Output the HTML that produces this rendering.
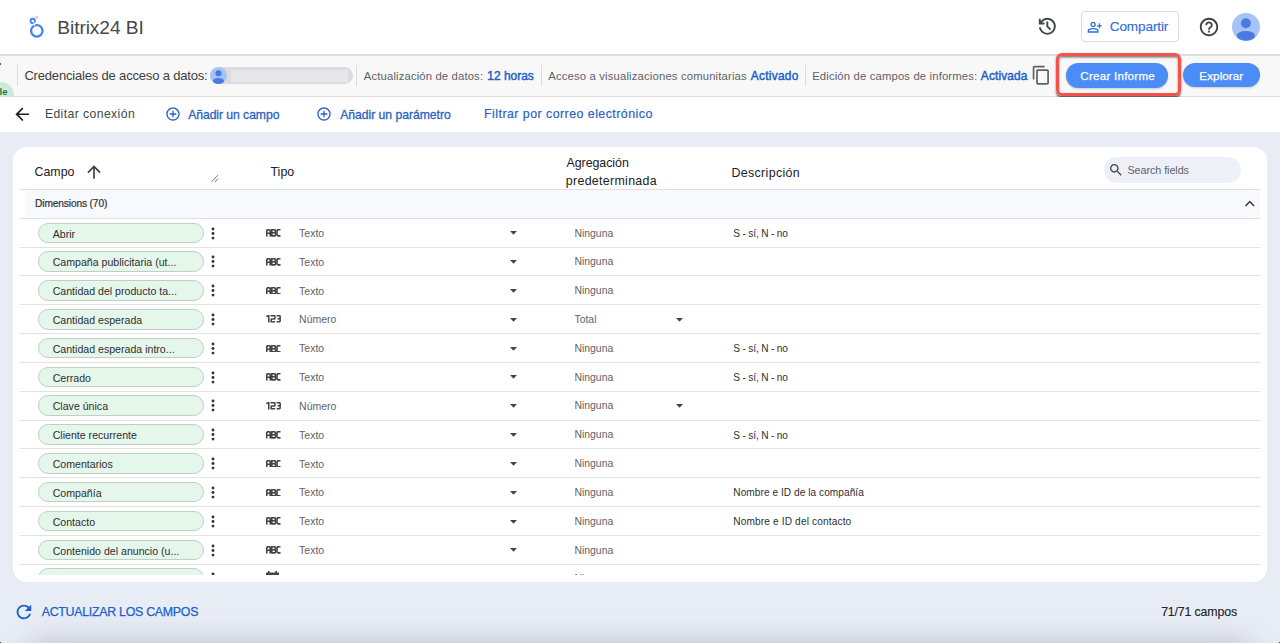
<!DOCTYPE html>
<html><head><meta charset="utf-8"><title>Bitrix24 BI</title><style>
*{margin:0;padding:0}
html,body{width:1280px;height:643px;overflow:hidden;background:#e8ecf5;font-family:'Liberation Sans',sans-serif}
.tx,.rt{position:absolute;line-height:1;white-space:nowrap;font-family:'Liberation Sans',sans-serif}
svg{overflow:visible}
</style></head><body>
<div style="position:absolute;left:0.00px;top:0.00px;width:1280.00px;height:54.00px;background:#fff;"></div>
<div style="position:absolute;left:0.00px;top:54.00px;width:1280.00px;height:2.00px;background:#dcdde1;"></div>
<svg style="position:absolute;left:26.00px;top:13.00px;width:22.00px;height:28.00px;" viewBox="26 13 22 28"><circle cx="36.8" cy="30.8" r="5.75" fill="none" stroke="#4285f4" stroke-width="2.3"/><circle cx="32.7" cy="20.9" r="2.15" fill="none" stroke="#4285f4" stroke-width="1.85"/><circle cx="36.5" cy="17.3" r="1.15" fill="none" stroke="#8ab4f8" stroke-width="0.8"/><path d="M33.9 22.0L34.6 26.0" stroke="#fff" stroke-width="1.1"/></svg>
<svg style="position:absolute;left:1036.40px;top:15.10px;width:22.60px;height:22.60px;" viewBox="0 -960 960 960"><path d="M480-120q-138 0-240.5-91.5T122-440h82q14 104 92.5 172T480-200q117 0 198.5-81.5T760-480q0-117-81.5-198.5T480-760q-69 0-129 32t-101 88h110v80H120v-240h80v94q51-64 124.5-99T480-840q75 0 140.5 28.5t114 77q48.5 48.5 77 114T840-480q0 75-28.5 140.5t-77 114q-48.5 48.5-114 77T480-120Zm112-192L440-464v-216h80v184l128 128-56 56Z" fill="#444746"/></svg>
<div style="position:absolute;left:1081.00px;top:11.30px;width:97.50px;height:30.40px;box-sizing:border-box;border:1px solid #dadce0;border-radius:4px;background:#fff;"></div>
<svg style="position:absolute;left:1086.60px;top:18.50px;width:16.40px;height:16.40px;" viewBox="0 -960 960 960"><path d="M360-480q-66 0-113-47t-47-113q0-66 47-113t113-47q66 0 113 47t47 113q0 66-47 113t-113 47ZM40-160v-112q0-34 17.5-62.5T104-378q62-31 126-46.5T360-440q66 0 130 15.5T616-378q29 15 46.5 43.5T680-272v112H40Zm80-80h480v-32q0-11-5.5-20T580-306q-54-27-109-40.5T360-360q-56 0-111 13.5T140-306q-9 5-14.5 14t-5.5 20v32Zm240-320q33 0 56.5-23.5T440-640q0-33-23.5-56.5T360-720q-33 0-56.5 23.5T280-640q0 33 23.5 56.5T360-560Z" fill="#2f6fdc"/></svg>
<svg style="position:absolute;left:1096.00px;top:21.50px;width:7.00px;height:7.00px;" viewBox="1096 21.5 7 7"><path d="M1099.4 22.8V27.7M1096.95 25.25H1101.85" stroke="#2f6fdc" stroke-width="1.25"/></svg>
<svg style="position:absolute;left:1197.50px;top:15.50px;width:22.00px;height:22.00px;" viewBox="0 0 24 24"><path d="M11 18h2v-2h-2v2zm1-16C6.48 2 2 6.48 2 12s4.48 10 10 10 10-4.48 10-10S17.52 2 12 2zm0 18c-4.41 0-8-3.59-8-8s3.59-8 8-8 8 3.59 8 8-3.59 8-8 8zm0-14c-2.21 0-4 1.790-4 4h2c0-1.1.9-2 2-2s2 .9 2 2c0 2-3 1.75-3 5h2c0-2.25 3-2.5 3-5 0-2.21-1.79-4-4-4z" fill="#3c4043"/></svg>
<svg style="position:absolute;left:1232.00px;top:12.80px;width:28.00px;height:28.00px;" viewBox="0 0 28 28"><circle cx="14" cy="14" r="14" fill="#a6c3f8"/><circle cx="13.9" cy="10.3" r="5.0" fill="#4a7be2"/><ellipse cx="13.9" cy="22.8" rx="9.1" ry="4.9" fill="#4a7be2"/></svg>
<div style="position:absolute;left:0.00px;top:56.00px;width:1280.00px;height:40.00px;background:#f8f8f8;"></div>
<div style="position:absolute;left:0.00px;top:95.70px;width:1280.00px;height:1.20px;background:#dedede;"></div>
<div style="position:absolute;left:0.00px;top:63.00px;width:1.30px;height:1.50px;background:#555;"></div>
<div style="position:absolute;left:-14.00px;top:82.00px;width:27.70px;height:26.00px;background:#cfead7;border-radius:13px;"></div>
<div style="position:absolute;left:-0.5px;top:86.5px;font:bold 9.5px 'Liberation Sans',sans-serif;color:#1e7e3e;line-height:1">le</div>
<div style="position:absolute;left:17.20px;top:65.00px;width:1.00px;height:20.50px;background:#dcdcdc;"></div>
<div style="position:absolute;left:356.30px;top:65.00px;width:1.00px;height:20.50px;background:#dcdcdc;"></div>
<div style="position:absolute;left:541.20px;top:65.00px;width:1.00px;height:20.50px;background:#dcdcdc;"></div>
<div style="position:absolute;left:805.20px;top:65.00px;width:1.00px;height:20.50px;background:#dcdcdc;"></div>
<div style="position:absolute;left:210.10px;top:66.80px;width:142.60px;height:17.20px;background:#dcdcdf;border-radius:8.6px;"></div>
<div style="position:absolute;left:230.50px;top:69.80px;width:117.00px;height:12.20px;background:#e6e7eb;filter:blur(0.6px);"></div>
<svg style="position:absolute;left:210.10px;top:66.80px;width:17.10px;height:17.10px;" viewBox="0 0 28 28"><circle cx="14" cy="14" r="14" fill="#a6c3f8"/><circle cx="13.9" cy="10.3" r="5.0" fill="#4a7be2"/><ellipse cx="13.9" cy="22.8" rx="9.1" ry="4.9" fill="#4a7be2"/></svg>
<svg style="position:absolute;left:1031.30px;top:65.10px;width:20.50px;height:20.50px;" viewBox="0 0 24 24"><path d="M16 1H4c-1.1 0-2 .9-2 2v14h2V3h12V1zm3 4H8c-1.1 0-2 .9-2 2v14c0 1.1.9 2 2 2h11c1.1 0 2-.9 2-2V7c0-1.1-.9-2-2-2zm0 16H8V7h11v14z" fill="#616161"/></svg>
<div style="position:absolute;left:1055.70px;top:53.30px;width:125.00px;height:42.40px;box-sizing:border-box;border:3px solid #f4524a;border-radius:6px;box-shadow:0 1.5px 2px rgba(0,0,0,.6), inset 0 1.5px 2px rgba(0,0,0,.5);"></div>
<div style="position:absolute;left:1066.00px;top:63.00px;width:102.40px;height:24.50px;background:#4b8cf6;border-radius:12.25px;box-shadow:0 1px 2px rgba(0,0,0,.18);"></div>
<div style="position:absolute;left:1183.30px;top:63.20px;width:76.50px;height:24.20px;background:#4b8cf6;border-radius:12.1px;box-shadow:0 1px 2px rgba(0,0,0,.18);"></div>
<div style="position:absolute;left:0.00px;top:96.90px;width:1280.00px;height:35.10px;background:#fff;"></div>
<svg style="position:absolute;left:11.70px;top:104.00px;width:20.50px;height:20.50px;" viewBox="0 0 24 24"><path d="M20 11H7.83l5.59-5.59L12 4l-8 8 8 8 1.41-1.41L7.83 13H20v-2z" fill="#202124"/></svg>
<svg style="position:absolute;left:164.50px;top:106.20px;width:16.00px;height:16.00px;" viewBox="0 0 24 24"><path d="M13 7h-2v4H7v2h4v4h2v-4h4v-2h-4V7zm-1-5C6.48 2 2 6.48 2 12s4.48 10 10 10 10-4.48 10-10S17.52 2 12 2zm0 18c-4.41 0-8-3.59-8-8s3.59-8 8-8 8 3.59 8 8-3.59 8-8 8z" fill="#2a63c0"/></svg>
<svg style="position:absolute;left:316.10px;top:106.20px;width:16.00px;height:16.00px;" viewBox="0 0 24 24"><path d="M13 7h-2v4H7v2h4v4h2v-4h4v-2h-4V7zm-1-5C6.48 2 2 6.48 2 12s4.48 10 10 10 10-4.48 10-10S17.52 2 12 2zm0 18c-4.41 0-8-3.59-8-8s3.59-8 8-8 8 3.59 8 8-3.59 8-8 8z" fill="#2a63c0"/></svg>
<div style="position:absolute;left:0.00px;top:132.00px;width:1280.00px;height:511.00px;background:#e8ecf5;"></div>
<div style="position:absolute;left:13.00px;top:147.00px;width:1254.30px;height:435.00px;background:#fff;border-radius:14px;"></div>
<svg style="position:absolute;left:84.20px;top:161.90px;width:20.00px;height:20.00px;" viewBox="0 0 24 24"><path d="M4 12l1.41 1.41L11 7.83V20h2V7.83l5.58 5.59L20 12l-8-8-8 8z" fill="#3c4043"/></svg>
<svg style="position:absolute;left:210.00px;top:173.00px;width:10.00px;height:10.00px;" viewBox="210 173 10 10"><path d="M211.7 181.7L217.8 175.2M215 182L218.2 178.6" stroke="#666" stroke-width="0.9"/></svg>
<div style="position:absolute;left:1103.60px;top:157.20px;width:137.00px;height:25.60px;background:#eef0f8;border-radius:12.8px;"></div>
<svg style="position:absolute;left:1108.00px;top:161.70px;width:16.00px;height:16.00px;" viewBox="0 0 24 24"><path d="M15.5 14h-.79l-.28-.27C15.41 12.59 16 11.11 16 9.5 16 5.91 13.09 3 9.5 3S3 5.91 3 9.5 5.91 16 9.5 16c1.61 0 3.090-.59 4.23-1.57l.27.28v.79l5 4.99L20.49 19l-4.99-5zm-6 0C7.01 14 5 11.99 5 9.5S7.01 5 9.5 5 14 7.01 14 9.5 11.99 14 9.5 14z" fill="#444746"/></svg>
<div style="position:absolute;left:20.00px;top:188.60px;width:1240.00px;height:1.00px;background:#e0e0e0;"></div>
<div style="position:absolute;left:26.00px;top:189.60px;width:1234.00px;height:28.50px;background:#f8f9fd;"></div>
<svg style="position:absolute;left:1239.70px;top:194.10px;width:19.60px;height:19.60px;" viewBox="0 0 24 24"><path d="M12 8l-6 6 1.41 1.41L12 10.83l4.59 4.58L18 14z" fill="#3c4043"/></svg>
<div style="position:absolute;left:20.00px;top:218.00px;width:1240.00px;height:1.00px;background:#e0e0e0;"></div>
<div style="position:absolute;left:13px;top:219px;width:1254px;height:355.7px;overflow:hidden">
<div style="position:absolute;left:24.50px;top:3.50px;width:166.10px;height:20.60px;box-sizing:border-box;background:#e5f6eb;border:1px solid #c0cec4;border-radius:10.3px;"></div>
<div class="rt" style="left:39.70px;top:9.53px;font-size:10.6px;color:#2e2f31">Abrir</div>
<svg style="position:absolute;left:197.90px;top:7.55px;width:4.00px;height:13.00px;" viewBox="0 0 4 13"><circle cx="2" cy="2.0" r="1.45" fill="#333"/><circle cx="2" cy="6.55" r="1.45" fill="#333"/><circle cx="2" cy="11.1" r="1.45" fill="#333"/></svg>
<svg style="position:absolute;left:252.50px;top:10.25px;width:15.20px;height:7.55px;overflow:hidden;" viewBox="0 0 15.5 7.7"><g fill="none" stroke="#444" stroke-width="1.7"><path d="M0.75 7.7V2.2Q0.75 0.75 2.2 0.75H2.9Q4.35 0.75 4.35 2.2V7.7M0.75 4.3H4.35"/><path d="M5.9 0.75H8.4Q9.6 0.75 9.6 1.95V2.6Q9.6 3.8 8.4 3.8H6M8.4 3.8Q9.8 3.8 9.8 5.0V5.75Q9.8 6.95 8.6 6.95H5.9M5.9 0.03V7.67"/><path d="M14.8 0.75H12.5Q11.2 0.75 11.2 2.05V5.65Q11.2 6.95 12.5 6.95H14.8"/></g></svg>
<div class="rt" style="left:286.10px;top:9.01px;font-size:10.5px;color:#5f6368">Texto</div>
<svg style="position:absolute;left:497.30px;top:12.30px;width:7.00px;height:4.00px;" viewBox="0 0 7 4"><path d="M0 0H7L3.5 3.8Z" fill="#444"/></svg>
<div class="rt" style="left:561.50px;top:9.50px;font-size:10.4px;color:#5f6368">Ninguna</div>
<div class="rt" style="left:720.30px;top:9.95px;font-size:10.1px;color:#2e2f31;letter-spacing:-0.16px">S - sí, N - no</div>
<div style="position:absolute;left:7.00px;top:27.62px;width:1240.00px;height:1.00px;background:#e3e3e3;"></div>
<div style="position:absolute;left:24.50px;top:32.32px;width:166.10px;height:20.60px;box-sizing:border-box;background:#e5f6eb;border:1px solid #c0cec4;border-radius:10.3px;"></div>
<div class="rt" style="left:39.70px;top:38.35px;font-size:10.6px;color:#2e2f31">Campaña publicitaria (ut...</div>
<svg style="position:absolute;left:197.90px;top:36.37px;width:4.00px;height:13.00px;" viewBox="0 0 4 13"><circle cx="2" cy="2.0" r="1.45" fill="#333"/><circle cx="2" cy="6.55" r="1.45" fill="#333"/><circle cx="2" cy="11.1" r="1.45" fill="#333"/></svg>
<svg style="position:absolute;left:252.50px;top:39.07px;width:15.20px;height:7.55px;overflow:hidden;" viewBox="0 0 15.5 7.7"><g fill="none" stroke="#444" stroke-width="1.7"><path d="M0.75 7.7V2.2Q0.75 0.75 2.2 0.75H2.9Q4.35 0.75 4.35 2.2V7.7M0.75 4.3H4.35"/><path d="M5.9 0.75H8.4Q9.6 0.75 9.6 1.95V2.6Q9.6 3.8 8.4 3.8H6M8.4 3.8Q9.8 3.8 9.8 5.0V5.75Q9.8 6.95 8.6 6.95H5.9M5.9 0.03V7.67"/><path d="M14.8 0.75H12.5Q11.2 0.75 11.2 2.05V5.65Q11.2 6.95 12.5 6.95H14.8"/></g></svg>
<div class="rt" style="left:286.10px;top:37.83px;font-size:10.5px;color:#5f6368">Texto</div>
<svg style="position:absolute;left:497.30px;top:41.12px;width:7.00px;height:4.00px;" viewBox="0 0 7 4"><path d="M0 0H7L3.5 3.8Z" fill="#444"/></svg>
<div class="rt" style="left:561.50px;top:38.32px;font-size:10.4px;color:#5f6368">Ninguna</div>
<div style="position:absolute;left:7.00px;top:56.44px;width:1240.00px;height:1.00px;background:#e3e3e3;"></div>
<div style="position:absolute;left:24.50px;top:61.14px;width:166.10px;height:20.60px;box-sizing:border-box;background:#e5f6eb;border:1px solid #c0cec4;border-radius:10.3px;"></div>
<div class="rt" style="left:39.70px;top:67.17px;font-size:10.6px;color:#2e2f31">Cantidad del producto ta...</div>
<svg style="position:absolute;left:197.90px;top:65.19px;width:4.00px;height:13.00px;" viewBox="0 0 4 13"><circle cx="2" cy="2.0" r="1.45" fill="#333"/><circle cx="2" cy="6.55" r="1.45" fill="#333"/><circle cx="2" cy="11.1" r="1.45" fill="#333"/></svg>
<svg style="position:absolute;left:252.50px;top:67.89px;width:15.20px;height:7.55px;overflow:hidden;" viewBox="0 0 15.5 7.7"><g fill="none" stroke="#444" stroke-width="1.7"><path d="M0.75 7.7V2.2Q0.75 0.75 2.2 0.75H2.9Q4.35 0.75 4.35 2.2V7.7M0.75 4.3H4.35"/><path d="M5.9 0.75H8.4Q9.6 0.75 9.6 1.95V2.6Q9.6 3.8 8.4 3.8H6M8.4 3.8Q9.8 3.8 9.8 5.0V5.75Q9.8 6.95 8.6 6.95H5.9M5.9 0.03V7.67"/><path d="M14.8 0.75H12.5Q11.2 0.75 11.2 2.05V5.65Q11.2 6.95 12.5 6.95H14.8"/></g></svg>
<div class="rt" style="left:286.10px;top:66.65px;font-size:10.5px;color:#5f6368">Texto</div>
<svg style="position:absolute;left:497.30px;top:69.94px;width:7.00px;height:4.00px;" viewBox="0 0 7 4"><path d="M0 0H7L3.5 3.8Z" fill="#444"/></svg>
<div class="rt" style="left:561.50px;top:67.14px;font-size:10.4px;color:#5f6368">Ninguna</div>
<div style="position:absolute;left:7.00px;top:85.26px;width:1240.00px;height:1.00px;background:#e3e3e3;"></div>
<div style="position:absolute;left:24.50px;top:89.96px;width:166.10px;height:20.60px;box-sizing:border-box;background:#e5f6eb;border:1px solid #c0cec4;border-radius:10.3px;"></div>
<div class="rt" style="left:39.70px;top:95.99px;font-size:10.6px;color:#2e2f31">Cantidad esperada</div>
<svg style="position:absolute;left:197.90px;top:94.01px;width:4.00px;height:13.00px;" viewBox="0 0 4 13"><circle cx="2" cy="2.0" r="1.45" fill="#333"/><circle cx="2" cy="6.55" r="1.45" fill="#333"/><circle cx="2" cy="11.1" r="1.45" fill="#333"/></svg>
<svg style="position:absolute;left:252.90px;top:96.46px;width:15.50px;height:8.10px;" viewBox="0 0 15.5 8.1"><g fill="none" stroke="#444" stroke-width="1.55"><path d="M0.3 1.7L2.0 0.725H2.75V7.4"/><path d="M4.5 0.725H8.3Q8.95 0.725 8.95 1.4V3.3Q8.95 3.95 8.3 3.95H5.85Q5.2 3.95 5.2 4.6V6.675H9.1"/><path d="M10.6 0.725H13.5Q14.15 0.725 14.15 1.4V6.0Q14.15 6.675 13.5 6.675H10.6M11.6 3.7H14.15"/></g></svg>
<div class="rt" style="left:286.10px;top:95.47px;font-size:10.5px;color:#5f6368">Número</div>
<svg style="position:absolute;left:497.30px;top:98.76px;width:7.00px;height:4.00px;" viewBox="0 0 7 4"><path d="M0 0H7L3.5 3.8Z" fill="#444"/></svg>
<div class="rt" style="left:561.50px;top:95.96px;font-size:10.4px;color:#5f6368">Total</div>
<svg style="position:absolute;left:662.70px;top:98.76px;width:7.00px;height:4.00px;" viewBox="0 0 7 4"><path d="M0 0H7L3.5 3.8Z" fill="#444"/></svg>
<div style="position:absolute;left:7.00px;top:114.08px;width:1240.00px;height:1.00px;background:#e3e3e3;"></div>
<div style="position:absolute;left:24.50px;top:118.78px;width:166.10px;height:20.60px;box-sizing:border-box;background:#e5f6eb;border:1px solid #c0cec4;border-radius:10.3px;"></div>
<div class="rt" style="left:39.70px;top:124.81px;font-size:10.6px;color:#2e2f31">Cantidad esperada intro...</div>
<svg style="position:absolute;left:197.90px;top:122.83px;width:4.00px;height:13.00px;" viewBox="0 0 4 13"><circle cx="2" cy="2.0" r="1.45" fill="#333"/><circle cx="2" cy="6.55" r="1.45" fill="#333"/><circle cx="2" cy="11.1" r="1.45" fill="#333"/></svg>
<svg style="position:absolute;left:252.50px;top:125.53px;width:15.20px;height:7.55px;overflow:hidden;" viewBox="0 0 15.5 7.7"><g fill="none" stroke="#444" stroke-width="1.7"><path d="M0.75 7.7V2.2Q0.75 0.75 2.2 0.75H2.9Q4.35 0.75 4.35 2.2V7.7M0.75 4.3H4.35"/><path d="M5.9 0.75H8.4Q9.6 0.75 9.6 1.95V2.6Q9.6 3.8 8.4 3.8H6M8.4 3.8Q9.8 3.8 9.8 5.0V5.75Q9.8 6.95 8.6 6.95H5.9M5.9 0.03V7.67"/><path d="M14.8 0.75H12.5Q11.2 0.75 11.2 2.05V5.65Q11.2 6.95 12.5 6.95H14.8"/></g></svg>
<div class="rt" style="left:286.10px;top:124.29px;font-size:10.5px;color:#5f6368">Texto</div>
<svg style="position:absolute;left:497.30px;top:127.58px;width:7.00px;height:4.00px;" viewBox="0 0 7 4"><path d="M0 0H7L3.5 3.8Z" fill="#444"/></svg>
<div class="rt" style="left:561.50px;top:124.78px;font-size:10.4px;color:#5f6368">Ninguna</div>
<div class="rt" style="left:720.30px;top:125.23px;font-size:10.1px;color:#2e2f31;letter-spacing:-0.16px">S - sí, N - no</div>
<div style="position:absolute;left:7.00px;top:142.90px;width:1240.00px;height:1.00px;background:#e3e3e3;"></div>
<div style="position:absolute;left:24.50px;top:147.60px;width:166.10px;height:20.60px;box-sizing:border-box;background:#e5f6eb;border:1px solid #c0cec4;border-radius:10.3px;"></div>
<div class="rt" style="left:39.70px;top:153.63px;font-size:10.6px;color:#2e2f31">Cerrado</div>
<svg style="position:absolute;left:197.90px;top:151.65px;width:4.00px;height:13.00px;" viewBox="0 0 4 13"><circle cx="2" cy="2.0" r="1.45" fill="#333"/><circle cx="2" cy="6.55" r="1.45" fill="#333"/><circle cx="2" cy="11.1" r="1.45" fill="#333"/></svg>
<svg style="position:absolute;left:252.50px;top:154.35px;width:15.20px;height:7.55px;overflow:hidden;" viewBox="0 0 15.5 7.7"><g fill="none" stroke="#444" stroke-width="1.7"><path d="M0.75 7.7V2.2Q0.75 0.75 2.2 0.75H2.9Q4.35 0.75 4.35 2.2V7.7M0.75 4.3H4.35"/><path d="M5.9 0.75H8.4Q9.6 0.75 9.6 1.95V2.6Q9.6 3.8 8.4 3.8H6M8.4 3.8Q9.8 3.8 9.8 5.0V5.75Q9.8 6.95 8.6 6.95H5.9M5.9 0.03V7.67"/><path d="M14.8 0.75H12.5Q11.2 0.75 11.2 2.05V5.65Q11.2 6.95 12.5 6.95H14.8"/></g></svg>
<div class="rt" style="left:286.10px;top:153.11px;font-size:10.5px;color:#5f6368">Texto</div>
<svg style="position:absolute;left:497.30px;top:156.40px;width:7.00px;height:4.00px;" viewBox="0 0 7 4"><path d="M0 0H7L3.5 3.8Z" fill="#444"/></svg>
<div class="rt" style="left:561.50px;top:153.60px;font-size:10.4px;color:#5f6368">Ninguna</div>
<div class="rt" style="left:720.30px;top:154.05px;font-size:10.1px;color:#2e2f31;letter-spacing:-0.16px">S - sí, N - no</div>
<div style="position:absolute;left:7.00px;top:171.72px;width:1240.00px;height:1.00px;background:#e3e3e3;"></div>
<div style="position:absolute;left:24.50px;top:176.42px;width:166.10px;height:20.60px;box-sizing:border-box;background:#e5f6eb;border:1px solid #c0cec4;border-radius:10.3px;"></div>
<div class="rt" style="left:39.70px;top:182.45px;font-size:10.6px;color:#2e2f31">Clave única</div>
<svg style="position:absolute;left:197.90px;top:180.47px;width:4.00px;height:13.00px;" viewBox="0 0 4 13"><circle cx="2" cy="2.0" r="1.45" fill="#333"/><circle cx="2" cy="6.55" r="1.45" fill="#333"/><circle cx="2" cy="11.1" r="1.45" fill="#333"/></svg>
<svg style="position:absolute;left:252.90px;top:182.92px;width:15.50px;height:8.10px;" viewBox="0 0 15.5 8.1"><g fill="none" stroke="#444" stroke-width="1.55"><path d="M0.3 1.7L2.0 0.725H2.75V7.4"/><path d="M4.5 0.725H8.3Q8.95 0.725 8.95 1.4V3.3Q8.95 3.95 8.3 3.95H5.85Q5.2 3.95 5.2 4.6V6.675H9.1"/><path d="M10.6 0.725H13.5Q14.15 0.725 14.15 1.4V6.0Q14.15 6.675 13.5 6.675H10.6M11.6 3.7H14.15"/></g></svg>
<div class="rt" style="left:286.10px;top:181.93px;font-size:10.5px;color:#5f6368">Número</div>
<svg style="position:absolute;left:497.30px;top:185.22px;width:7.00px;height:4.00px;" viewBox="0 0 7 4"><path d="M0 0H7L3.5 3.8Z" fill="#444"/></svg>
<div class="rt" style="left:561.50px;top:182.42px;font-size:10.4px;color:#5f6368">Ninguna</div>
<svg style="position:absolute;left:662.70px;top:185.22px;width:7.00px;height:4.00px;" viewBox="0 0 7 4"><path d="M0 0H7L3.5 3.8Z" fill="#444"/></svg>
<div style="position:absolute;left:7.00px;top:200.54px;width:1240.00px;height:1.00px;background:#e3e3e3;"></div>
<div style="position:absolute;left:24.50px;top:205.24px;width:166.10px;height:20.60px;box-sizing:border-box;background:#e5f6eb;border:1px solid #c0cec4;border-radius:10.3px;"></div>
<div class="rt" style="left:39.70px;top:211.27px;font-size:10.6px;color:#2e2f31">Cliente recurrente</div>
<svg style="position:absolute;left:197.90px;top:209.29px;width:4.00px;height:13.00px;" viewBox="0 0 4 13"><circle cx="2" cy="2.0" r="1.45" fill="#333"/><circle cx="2" cy="6.55" r="1.45" fill="#333"/><circle cx="2" cy="11.1" r="1.45" fill="#333"/></svg>
<svg style="position:absolute;left:252.50px;top:211.99px;width:15.20px;height:7.55px;overflow:hidden;" viewBox="0 0 15.5 7.7"><g fill="none" stroke="#444" stroke-width="1.7"><path d="M0.75 7.7V2.2Q0.75 0.75 2.2 0.75H2.9Q4.35 0.75 4.35 2.2V7.7M0.75 4.3H4.35"/><path d="M5.9 0.75H8.4Q9.6 0.75 9.6 1.95V2.6Q9.6 3.8 8.4 3.8H6M8.4 3.8Q9.8 3.8 9.8 5.0V5.75Q9.8 6.95 8.6 6.95H5.9M5.9 0.03V7.67"/><path d="M14.8 0.75H12.5Q11.2 0.75 11.2 2.05V5.65Q11.2 6.95 12.5 6.95H14.8"/></g></svg>
<div class="rt" style="left:286.10px;top:210.75px;font-size:10.5px;color:#5f6368">Texto</div>
<svg style="position:absolute;left:497.30px;top:214.04px;width:7.00px;height:4.00px;" viewBox="0 0 7 4"><path d="M0 0H7L3.5 3.8Z" fill="#444"/></svg>
<div class="rt" style="left:561.50px;top:211.24px;font-size:10.4px;color:#5f6368">Ninguna</div>
<div class="rt" style="left:720.30px;top:211.69px;font-size:10.1px;color:#2e2f31;letter-spacing:-0.16px">S - sí, N - no</div>
<div style="position:absolute;left:7.00px;top:229.36px;width:1240.00px;height:1.00px;background:#e3e3e3;"></div>
<div style="position:absolute;left:24.50px;top:234.06px;width:166.10px;height:20.60px;box-sizing:border-box;background:#e5f6eb;border:1px solid #c0cec4;border-radius:10.3px;"></div>
<div class="rt" style="left:39.70px;top:240.09px;font-size:10.6px;color:#2e2f31">Comentarios</div>
<svg style="position:absolute;left:197.90px;top:238.11px;width:4.00px;height:13.00px;" viewBox="0 0 4 13"><circle cx="2" cy="2.0" r="1.45" fill="#333"/><circle cx="2" cy="6.55" r="1.45" fill="#333"/><circle cx="2" cy="11.1" r="1.45" fill="#333"/></svg>
<svg style="position:absolute;left:252.50px;top:240.81px;width:15.20px;height:7.55px;overflow:hidden;" viewBox="0 0 15.5 7.7"><g fill="none" stroke="#444" stroke-width="1.7"><path d="M0.75 7.7V2.2Q0.75 0.75 2.2 0.75H2.9Q4.35 0.75 4.35 2.2V7.7M0.75 4.3H4.35"/><path d="M5.9 0.75H8.4Q9.6 0.75 9.6 1.95V2.6Q9.6 3.8 8.4 3.8H6M8.4 3.8Q9.8 3.8 9.8 5.0V5.75Q9.8 6.95 8.6 6.95H5.9M5.9 0.03V7.67"/><path d="M14.8 0.75H12.5Q11.2 0.75 11.2 2.05V5.65Q11.2 6.95 12.5 6.95H14.8"/></g></svg>
<div class="rt" style="left:286.10px;top:239.57px;font-size:10.5px;color:#5f6368">Texto</div>
<svg style="position:absolute;left:497.30px;top:242.86px;width:7.00px;height:4.00px;" viewBox="0 0 7 4"><path d="M0 0H7L3.5 3.8Z" fill="#444"/></svg>
<div class="rt" style="left:561.50px;top:240.06px;font-size:10.4px;color:#5f6368">Ninguna</div>
<div style="position:absolute;left:7.00px;top:258.18px;width:1240.00px;height:1.00px;background:#e3e3e3;"></div>
<div style="position:absolute;left:24.50px;top:262.88px;width:166.10px;height:20.60px;box-sizing:border-box;background:#e5f6eb;border:1px solid #c0cec4;border-radius:10.3px;"></div>
<div class="rt" style="left:39.70px;top:268.91px;font-size:10.6px;color:#2e2f31">Compañía</div>
<svg style="position:absolute;left:197.90px;top:266.93px;width:4.00px;height:13.00px;" viewBox="0 0 4 13"><circle cx="2" cy="2.0" r="1.45" fill="#333"/><circle cx="2" cy="6.55" r="1.45" fill="#333"/><circle cx="2" cy="11.1" r="1.45" fill="#333"/></svg>
<svg style="position:absolute;left:252.50px;top:269.63px;width:15.20px;height:7.55px;overflow:hidden;" viewBox="0 0 15.5 7.7"><g fill="none" stroke="#444" stroke-width="1.7"><path d="M0.75 7.7V2.2Q0.75 0.75 2.2 0.75H2.9Q4.35 0.75 4.35 2.2V7.7M0.75 4.3H4.35"/><path d="M5.9 0.75H8.4Q9.6 0.75 9.6 1.95V2.6Q9.6 3.8 8.4 3.8H6M8.4 3.8Q9.8 3.8 9.8 5.0V5.75Q9.8 6.95 8.6 6.95H5.9M5.9 0.03V7.67"/><path d="M14.8 0.75H12.5Q11.2 0.75 11.2 2.05V5.65Q11.2 6.95 12.5 6.95H14.8"/></g></svg>
<div class="rt" style="left:286.10px;top:268.39px;font-size:10.5px;color:#5f6368">Texto</div>
<svg style="position:absolute;left:497.30px;top:271.68px;width:7.00px;height:4.00px;" viewBox="0 0 7 4"><path d="M0 0H7L3.5 3.8Z" fill="#444"/></svg>
<div class="rt" style="left:561.50px;top:268.88px;font-size:10.4px;color:#5f6368">Ninguna</div>
<div class="rt" style="left:720.30px;top:269.33px;font-size:10.1px;color:#2e2f31;letter-spacing:0.06px">Nombre e ID de la compañía</div>
<div style="position:absolute;left:7.00px;top:287.00px;width:1240.00px;height:1.00px;background:#e3e3e3;"></div>
<div style="position:absolute;left:24.50px;top:291.70px;width:166.10px;height:20.60px;box-sizing:border-box;background:#e5f6eb;border:1px solid #c0cec4;border-radius:10.3px;"></div>
<div class="rt" style="left:39.70px;top:297.73px;font-size:10.6px;color:#2e2f31">Contacto</div>
<svg style="position:absolute;left:197.90px;top:295.75px;width:4.00px;height:13.00px;" viewBox="0 0 4 13"><circle cx="2" cy="2.0" r="1.45" fill="#333"/><circle cx="2" cy="6.55" r="1.45" fill="#333"/><circle cx="2" cy="11.1" r="1.45" fill="#333"/></svg>
<svg style="position:absolute;left:252.50px;top:298.45px;width:15.20px;height:7.55px;overflow:hidden;" viewBox="0 0 15.5 7.7"><g fill="none" stroke="#444" stroke-width="1.7"><path d="M0.75 7.7V2.2Q0.75 0.75 2.2 0.75H2.9Q4.35 0.75 4.35 2.2V7.7M0.75 4.3H4.35"/><path d="M5.9 0.75H8.4Q9.6 0.75 9.6 1.95V2.6Q9.6 3.8 8.4 3.8H6M8.4 3.8Q9.8 3.8 9.8 5.0V5.75Q9.8 6.95 8.6 6.95H5.9M5.9 0.03V7.67"/><path d="M14.8 0.75H12.5Q11.2 0.75 11.2 2.05V5.65Q11.2 6.95 12.5 6.95H14.8"/></g></svg>
<div class="rt" style="left:286.10px;top:297.21px;font-size:10.5px;color:#5f6368">Texto</div>
<svg style="position:absolute;left:497.30px;top:300.50px;width:7.00px;height:4.00px;" viewBox="0 0 7 4"><path d="M0 0H7L3.5 3.8Z" fill="#444"/></svg>
<div class="rt" style="left:561.50px;top:297.70px;font-size:10.4px;color:#5f6368">Ninguna</div>
<div class="rt" style="left:720.30px;top:298.15px;font-size:10.1px;color:#2e2f31;letter-spacing:0.15px">Nombre e ID del contacto</div>
<div style="position:absolute;left:7.00px;top:315.82px;width:1240.00px;height:1.00px;background:#e3e3e3;"></div>
<div style="position:absolute;left:24.50px;top:320.52px;width:166.10px;height:20.60px;box-sizing:border-box;background:#e5f6eb;border:1px solid #c0cec4;border-radius:10.3px;"></div>
<div class="rt" style="left:39.70px;top:326.55px;font-size:10.6px;color:#2e2f31">Contenido del anuncio (u...</div>
<svg style="position:absolute;left:197.90px;top:324.57px;width:4.00px;height:13.00px;" viewBox="0 0 4 13"><circle cx="2" cy="2.0" r="1.45" fill="#333"/><circle cx="2" cy="6.55" r="1.45" fill="#333"/><circle cx="2" cy="11.1" r="1.45" fill="#333"/></svg>
<svg style="position:absolute;left:252.50px;top:327.27px;width:15.20px;height:7.55px;overflow:hidden;" viewBox="0 0 15.5 7.7"><g fill="none" stroke="#444" stroke-width="1.7"><path d="M0.75 7.7V2.2Q0.75 0.75 2.2 0.75H2.9Q4.35 0.75 4.35 2.2V7.7M0.75 4.3H4.35"/><path d="M5.9 0.75H8.4Q9.6 0.75 9.6 1.95V2.6Q9.6 3.8 8.4 3.8H6M8.4 3.8Q9.8 3.8 9.8 5.0V5.75Q9.8 6.95 8.6 6.95H5.9M5.9 0.03V7.67"/><path d="M14.8 0.75H12.5Q11.2 0.75 11.2 2.05V5.65Q11.2 6.95 12.5 6.95H14.8"/></g></svg>
<div class="rt" style="left:286.10px;top:326.03px;font-size:10.5px;color:#5f6368">Texto</div>
<svg style="position:absolute;left:497.30px;top:329.32px;width:7.00px;height:4.00px;" viewBox="0 0 7 4"><path d="M0 0H7L3.5 3.8Z" fill="#444"/></svg>
<div class="rt" style="left:561.50px;top:326.52px;font-size:10.4px;color:#5f6368">Ninguna</div>
<div style="position:absolute;left:7.00px;top:344.64px;width:1240.00px;height:1.00px;background:#e3e3e3;"></div>
<div style="position:absolute;left:24.50px;top:349.34px;width:166.10px;height:20.60px;box-sizing:border-box;background:#e5f6eb;border:1px solid #c0cec4;border-radius:10.3px;"></div>
<div class="rt" style="left:39.70px;top:355.37px;font-size:10.6px;color:#2e2f31">Creado el</div>
<svg style="position:absolute;left:197.90px;top:353.39px;width:4.00px;height:13.00px;" viewBox="0 0 4 13"><circle cx="2" cy="2.0" r="1.45" fill="#333"/><circle cx="2" cy="6.55" r="1.45" fill="#333"/><circle cx="2" cy="11.1" r="1.45" fill="#333"/></svg>
<svg style="position:absolute;left:252.20px;top:352.14px;width:15.50px;height:12.00px;" viewBox="0 0 15.5 12"><g fill="none" stroke="#444" stroke-width="1.6"><path d="M1 1.5H14V11H1Z" fill="#444" stroke="none"/><path d="M3.8 0V2M11.2 0V2" /></g></svg>
<div class="rt" style="left:286.10px;top:354.85px;font-size:10.5px;color:#5f6368">Fecha y hora</div>
<svg style="position:absolute;left:497.30px;top:358.14px;width:7.00px;height:4.00px;" viewBox="0 0 7 4"><path d="M0 0H7L3.5 3.8Z" fill="#444"/></svg>
<div class="rt" style="left:561.50px;top:355.34px;font-size:10.4px;color:#5f6368">Ninguna</div>
<div style="position:absolute;left:7.00px;top:373.46px;width:1240.00px;height:1.00px;background:#e3e3e3;"></div>
</div>
<div style="position:absolute;left:0;top:0;width:1280px;height:643px;overflow:hidden"><div style="position:absolute;left:30.00px;top:652.00px;width:1220.00px;height:40.00px;border-radius:20px;background:#aab;box-shadow:0 0 28px 10px rgba(70,75,95,.26);"></div></div>
<div style="position:absolute;left:0.00px;top:641.50px;width:1.20px;height:1.50px;background:#444;"></div>
<div style="position:absolute;left:1278.80px;top:641.50px;width:1.20px;height:1.50px;background:#444;"></div>
<svg style="position:absolute;left:12.65px;top:601.40px;width:21.90px;height:21.90px;" viewBox="0 0 24 24"><path d="M17.65 6.35C16.2 4.9 14.21 4 12 4c-4.42 0-7.99 3.58-7.99 8s3.570 8 7.99 8c3.73 0 6.84-2.55 7.73-6h-2.08c-.82 2.33-3.04 4-5.65 4-3.31 0-6-2.69-6-6s2.69-6 6-6c1.66 0 3.14.69 4.22 1.78L13 11h7V4l-2.35 2.35z" fill="#1b5fce"/></svg>
<div id="t_title" class="tx" style="left:57.34px;top:18.05px;font-size:19.2px;font-weight:400;color:#45484b;letter-spacing:-0.102px;">Bitrix24 BI</div>
<div id="t_share" class="tx" style="left:1109.73px;top:20.39px;font-size:13.6px;font-weight:400;color:#2f6fdc;letter-spacing:-0.127px;-webkit-text-stroke:0.15px #2f6fdc;">Compartir</div>
<div id="t_cred" class="tx" style="left:24.42px;top:69.00px;font-size:13px;font-weight:400;color:#3c4043;letter-spacing:-0.179px;">Credenciales de acceso a datos:</div>
<div id="t_upd" class="tx" style="left:363.84px;top:71.03px;font-size:11.3px;font-weight:400;color:#5f6368;letter-spacing:0.137px;">Actualización de datos:</div>
<div id="t_updv" class="tx" style="left:487.27px;top:70.53px;font-size:11.9px;font-weight:400;color:#1d5fc9;letter-spacing:0.027px;-webkit-text-stroke:0.45px #1d5fc9;">12 horas</div>
<div id="t_acc" class="tx" style="left:548.25px;top:71.03px;font-size:11.3px;font-weight:400;color:#5f6368;letter-spacing:0.158px;">Acceso a visualizaciones comunitarias</div>
<div id="t_accv" class="tx" style="left:750.86px;top:70.53px;font-size:11.9px;font-weight:400;color:#1d5fc9;letter-spacing:0.261px;-webkit-text-stroke:0.45px #1d5fc9;">Activado</div>
<div id="t_edi" class="tx" style="left:812.13px;top:71.03px;font-size:11.3px;font-weight:400;color:#5f6368;letter-spacing:0.149px;">Edición de campos de informes:</div>
<div id="t_ediv" class="tx" style="left:980.86px;top:70.53px;font-size:11.9px;font-weight:400;color:#1d5fc9;letter-spacing:0.116px;-webkit-text-stroke:0.45px #1d5fc9;">Activada</div>
<div id="t_crear" class="tx" style="left:1080.37px;top:69.88px;font-size:11.6px;font-weight:400;color:#ffffff;letter-spacing:0.240px;-webkit-text-stroke:0.25px #fff;">Crear Informe</div>
<div id="t_expl" class="tx" style="left:1199.36px;top:69.78px;font-size:11.6px;font-weight:400;color:#ffffff;letter-spacing:0.099px;-webkit-text-stroke:0.25px #fff;">Explorar</div>
<div id="t_edit" class="tx" style="left:44.88px;top:108.27px;font-size:12.2px;font-weight:400;color:#444746;letter-spacing:0.413px;">Editar conexión</div>
<div id="t_add1" class="tx" style="left:188.16px;top:109.07px;font-size:12.2px;font-weight:400;color:#2a63c0;letter-spacing:-0.062px;-webkit-text-stroke:0.3px #2a63c0;">Añadir un campo</div>
<div id="t_add2" class="tx" style="left:340.19px;top:109.07px;font-size:12.2px;font-weight:400;color:#2a63c0;letter-spacing:-0.028px;-webkit-text-stroke:0.3px #2a63c0;">Añadir un parámetro</div>
<div id="t_filt" class="tx" style="left:484.10px;top:108.40px;font-size:12.4px;font-weight:400;color:#2a63c0;letter-spacing:0.457px;-webkit-text-stroke:0.2px #2a63c0;">Filtrar por correo electrónico</div>
<div id="t_campo" class="tx" style="left:34.43px;top:166.20px;font-size:12.4px;font-weight:400;color:#202124;letter-spacing:0.027px;">Campo</div>
<div id="t_tipo" class="tx" style="left:270.46px;top:166.10px;font-size:12.4px;font-weight:400;color:#202124;letter-spacing:0.047px;">Tipo</div>
<div id="t_agg1" class="tx" style="left:566.51px;top:157.30px;font-size:12.4px;font-weight:400;color:#202124;letter-spacing:-0.040px;">Agregación</div>
<div id="t_agg2" class="tx" style="left:565.80px;top:175.40px;font-size:12.4px;font-weight:400;color:#202124;letter-spacing:0.312px;">predeterminada</div>
<div id="t_desc" class="tx" style="left:731.46px;top:166.70px;font-size:12.4px;font-weight:400;color:#202124;letter-spacing:0.357px;">Descripción</div>
<div id="t_search" class="tx" style="left:1127.50px;top:164.76px;font-size:10.8px;font-weight:400;color:#5f6368;letter-spacing:-0.080px;">Search fields</div>
<div id="t_dim" class="tx" style="left:35.08px;top:198.57px;font-size:10.2px;font-weight:400;color:#303134;letter-spacing:-0.138px;-webkit-text-stroke:0.2px #303134;">Dimensions (70)</div>
<div id="t_refresh" class="tx" style="left:41.66px;top:605.70px;font-size:12.4px;font-weight:400;color:#1b5fce;letter-spacing:-0.287px;-webkit-text-stroke:0.25px #1b5fce;">ACTUALIZAR LOS CAMPOS</div>
<div id="t_count" class="tx" style="left:1161.14px;top:605.70px;font-size:12.4px;font-weight:400;color:#202124;letter-spacing:-0.168px;-webkit-text-stroke:0.1px #202124;">71/71 campos</div>
</body></html>
